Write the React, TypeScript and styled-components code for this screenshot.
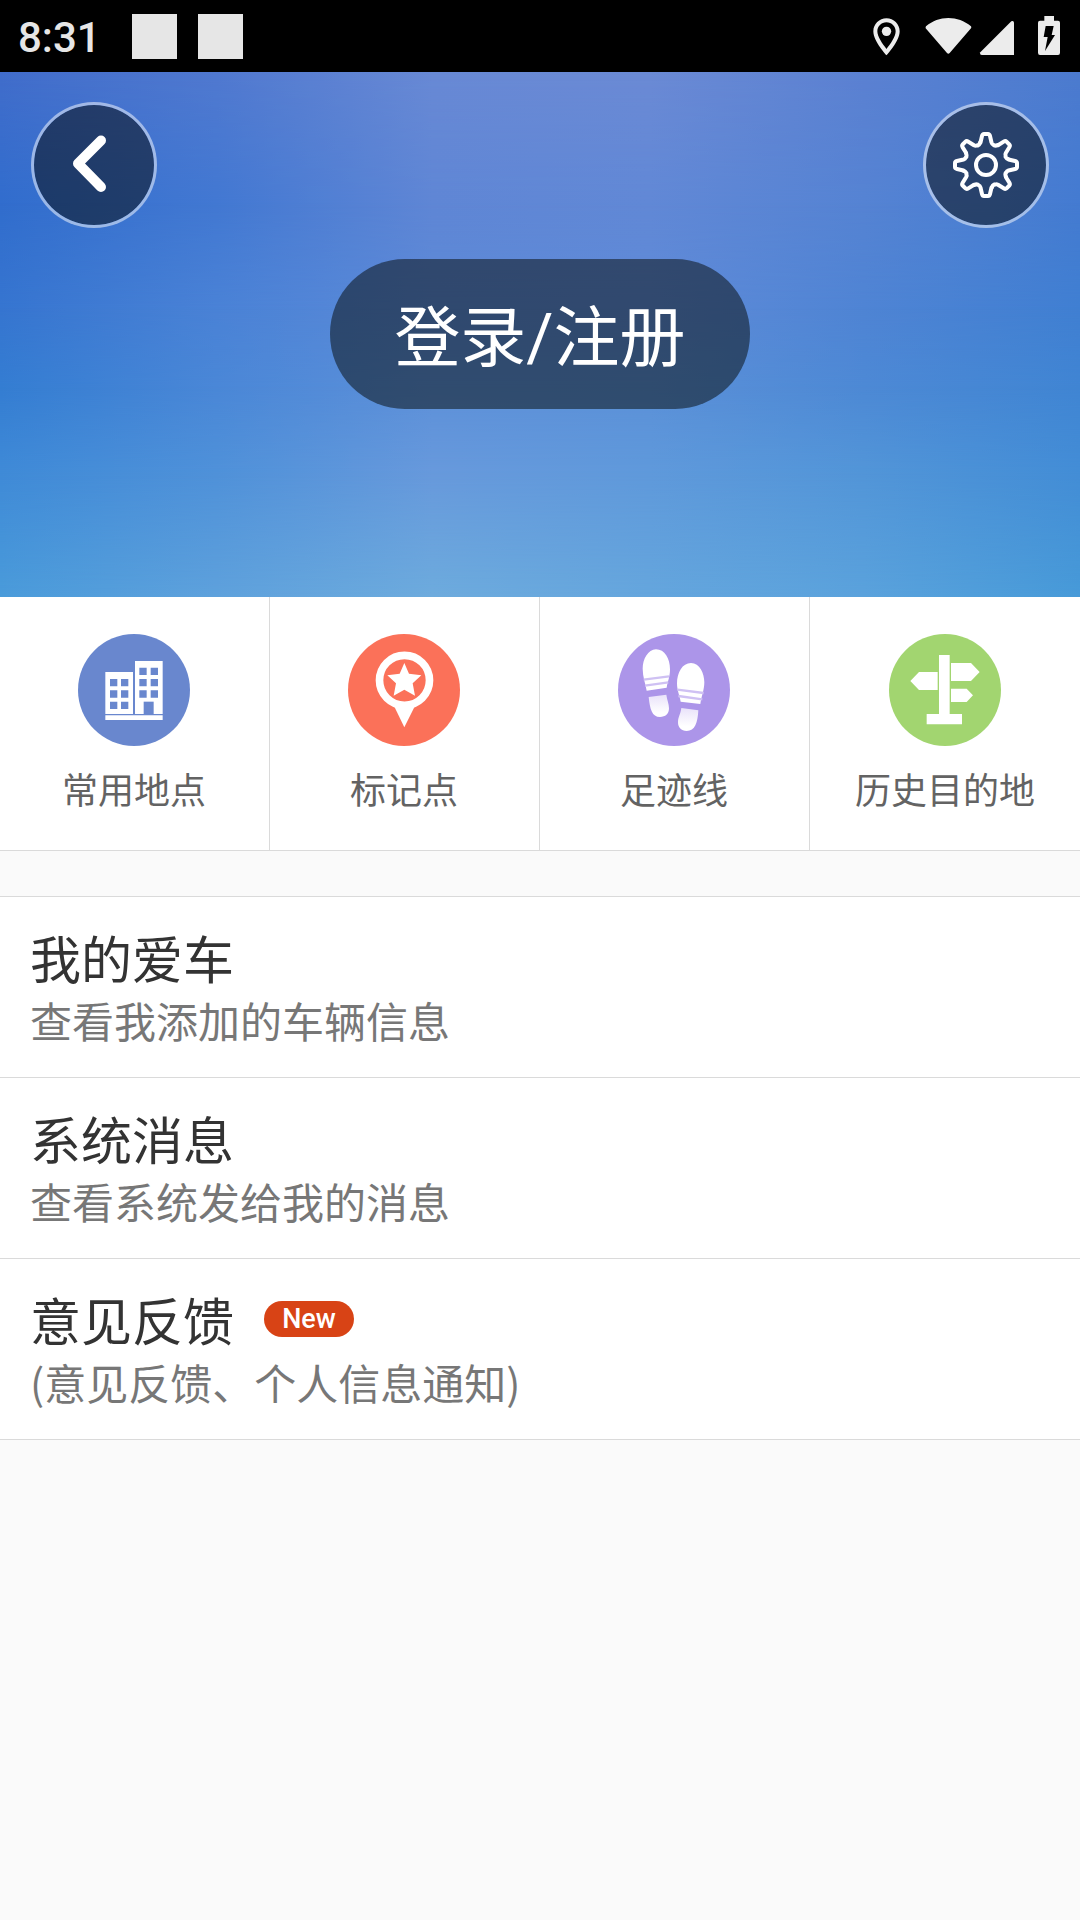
import React from "react";
import styled, { createGlobalStyle } from "styled-components";

const GlobalStyle = createGlobalStyle`
  *, *::before, *::after { box-sizing: border-box; }
  body {
    margin: 0;
    background: #fafafa;
    font-family: "Noto Sans CJK SC", "Noto Sans", sans-serif;
  }
  button { border: 0; padding: 0; font: inherit; cursor: pointer; }
`;

const StatusBar = styled.div`
  display: flex;
  align-items: center;
  justify-content: space-between;
  height: 72px;
  padding: 0 20px 0 18px;
  background: #000;
  color: #e6e6e6;
`;

const StatusGroup = styled.div`
  display: flex;
  align-items: center;
`;

const Clock = styled.time`
  width: 114px;
  font: 500 42px/48px Roboto, sans-serif;
  padding-top: 4px;
`;

const Notification = styled.span`
  width: 45px;
  height: 45px;
  margin-right: 21px;
  background: #e6e6e6;
`;

const Hero = styled.header`
  position: relative;
  isolation: isolate;
  display: flex;
  flex-direction: column;
  align-items: center;
  gap: 31px;
  padding: 30px 31px 188px;
  background: #5b8ad7;
`;

const Backdrop = styled.svg`
  position: absolute;
  inset: 0;
  z-index: -1;
  width: 100%;
  height: 100%;
`;

const HeroBar = styled.nav`
  display: flex;
  justify-content: space-between;
  align-self: stretch;
`;

const RoundButton = styled.button`
  display: grid;
  place-items: center;
  width: 126px;
  height: 126px;
  border: 3px solid rgba(255, 255, 255, 0.5);
  border-radius: 50%;
  background: rgba(4, 6, 6, 0.5);
  background-clip: padding-box;
`;

const LoginButton = styled.button`
  min-width: 420px;
  height: 150px;
  padding: 10px 64px 0;
  border-radius: 75px;
  background: rgba(4, 8, 6, 0.5);
  color: #fff;
  font-family: Roboto, "Noto Sans CJK SC", sans-serif;
  font-size: 66px;
  line-height: 96px;
`;

const Shortcuts = styled.nav`
  display: grid;
  grid-template-columns: repeat(4, 1fr);
  border-bottom: 1px solid #dadada;
  background: #fff;
`;

const Shortcut = styled.button`
  display: flex;
  flex-direction: column;
  align-items: center;
  gap: 16px;
  padding: 37px 0 35px;
  background: #fff;
  color: #636363;
  font-size: 36px;
  line-height: 53px;

  &:not(:last-child) {
    padding-right: 1px;
    border-right: 1px solid #dadada;
  }
`;

const Menu = styled.ul`
  margin: 45px 0 0;
  padding: 0;
  list-style: none;
  border-top: 1px solid #dadada;
`;

const MenuRow = styled.button`
  display: block;
  width: 100%;
  padding: 27px 30px;
  border-bottom: 1px solid #dadada;
  background: #fff;
  text-align: left;
`;

const MenuTitle = styled.span`
  display: flex;
  align-items: center;
  gap: 30px;
  color: #333;
  font-size: 51px;
  line-height: 66px;
`;

const MenuNote = styled.span`
  display: block;
  color: #777;
  font-size: 42px;
  line-height: 60px;
`;

const Badge = styled.span`
  width: 90px;
  height: 36px;
  border-radius: 18px;
  background: #d84315;
  color: #fff;
  font-family: Roboto, sans-serif;
  font-size: 27px;
  font-weight: 500;
  line-height: 37px;
  text-align: center;
`;

/* Soft sky: each row is a set of evenly spaced colours, faded into the row below it. */
const SKY = [
  { y: 0, colors: ["#416dcb", "#5079d0", "#6889d5", "#6b8ad5", "#5b81d2", "#4c7bcf"] },
  { y: 25, colors: ["#316dcd", "#4278d2", "#5f86d5", "#6188d6", "#5583d3", "#447bd1"] },
  { y: 45, colors: ["#3675d0", "#4a82d6", "#5c8ad8", "#5f8bd8", "#4f84d4", "#407fd2"] },
  { y: 60, colors: ["#347dd2", "#4a87d7", "#5d90d9", "#5b90d8", "#4d89d5", "#4085d3"] },
  { y: 76, colors: ["#3f8ad7", "#4f91d9", "#6799dc", "#5f99db", "#5295d8", "#438dd6"] },
  { y: 100, colors: ["#4a9bda", "#5ea1dc", "#6dabdd", "#65a6dd", "#5aa2dc", "#479ad8"] },
];

const Sky = () => (
  <Backdrop viewBox="0 0 100 100" preserveAspectRatio="none" aria-hidden="true">
    <defs>
      {SKY.map(({ y, colors }, row) => (
        <React.Fragment key={y}>
          <linearGradient id={`sky${row}`}>
            {colors.map((color, i) => (
              <stop key={color} offset={i / (colors.length - 1)} stopColor={color} />
            ))}
          </linearGradient>
          {row > 0 && (
            <>
              <linearGradient id={`fade${row}`} gradientUnits="userSpaceOnUse" x1="0" x2="0" y1={SKY[row - 1].y} y2={y}>
                <stop offset="0" stopColor="#fff" stopOpacity="0" />
                <stop offset="1" stopColor="#fff" />
              </linearGradient>
              <mask id={`mask${row}`} maskUnits="userSpaceOnUse" x="0" y="0" width="100" height="100" style={{ maskType: "alpha" }}>
                <rect width="100" height="100" fill={`url(#fade${row})`} />
              </mask>
            </>
          )}
        </React.Fragment>
      ))}
    </defs>
    {SKY.map(({ y }, row) => (
      <rect key={y} width="100" height="100" fill={`url(#sky${row})`} mask={row > 0 ? `url(#mask${row})` : undefined} />
    ))}
  </Backdrop>
);

const StatusIcons = () => (
  <svg width="188" height="40" viewBox="0 0 564 120" fill="#ececec" aria-hidden="true">
    <path d="M43.500 9C22 9 4 26 4 48c0 30 39.500 72 39.500 72S83 78 83 48C83 26 65 9 43.500 9zM43.500 101C31 85 16 64 16 48c0-15 12-27 27.500-27S71 33 71 48c0 16-15 37-27.500 53z" fillRule="evenodd" transform="translate(0 -2)" />
    <circle cx="43.500" cy="46" r="14" />
    <path d="M162 31C182 14 204 6 229 6s48 8 68 25q2 3 0 6L233 111q-4 5-8 0L161 37q-1-3 1-6z" />
    <path d="M418 16q7-4 8 4v97H330q-8 0-5-8z" />
    <path d="M517 0h29v14h12q6 0 6 6v90q0 7-6 7h-54q-6 0-6-7V20q0-6 6-6h13z" />
    <path d="M521 30h24l-6 27h10l-30 48 8-42h-12z" fill="#000" />
  </svg>
);

const BackIcon = () => (
  <svg width="120" height="120" viewBox="0 0 120 120" fill="none" aria-hidden="true">
    <path d="M67 35.500L44 58.500L67 82" stroke="#fff" strokeWidth="10" strokeLinecap="round" strokeLinejoin="round" />
  </svg>
);

const TOOTH =
  "M-5.500 -22.500L-4 -29Q-3.500 -31 -2 -31H2Q3.500 -31 4 -29L5.500 -22.500Q6 -20.800 7.500 -20.200L8.100 -19.600Q9.800 -19 11.600 -20";

const GearIcon = () => (
  <svg width="68" height="68" viewBox="-34 -34 68 68" fill="none" stroke="#fff" strokeWidth="4" strokeLinejoin="round" strokeLinecap="round" aria-hidden="true">
    {[0, 45, 90, 135, 180, 225, 270, 315].map((angle) => (
      <path key={angle} d={TOOTH} transform={`rotate(${angle})`} />
    ))}
    <circle r="10" />
  </svg>
);

const PlacesIcon = () => (
  <svg width="112" height="112" viewBox="234 162 336 336" aria-hidden="true">
    <circle cx="402" cy="330" r="168" fill="#6987ce" />
    <path fill="#fff" d="M316 276h83v126h-83zM405 243h83v159h-83zM316 406h172v14H316z" />
    <g fill="#6987ce">
      {[297, 331, 365].map((y) => (
        <path key={y} d={`M330 ${y}h22v22h-22zM363 ${y}h22v22h-22z`} />
      ))}
      {[263, 297, 331].map((y) => (
        <path key={y} d={`M418 ${y}h22v22h-22zM452 ${y}h22v22h-22z`} />
      ))}
      <path d="M431 365h30v37h-30z" />
    </g>
  </svg>
);

const MarkIcon = () => (
  <svg width="112" height="112" viewBox="235 162 336 336" aria-hidden="true">
    <circle cx="403" cy="330" r="168" fill="#fb7159" />
    <path fill="#fff" d="M372 376L404 442L437 376z" />
    <circle cx="404.500" cy="301" r="75" fill="#fb7159" stroke="#fff" strokeWidth="23" />
    <path fill="#fff" d="M404 249L418 281L455 286L429 310L436 347L404 329L372 347L379 310L353 286L390 281z" />
  </svg>
);

const TracksIcon = () => (
  <svg width="112" height="112" viewBox="234 162 336 336" aria-hidden="true">
    <defs>
      <linearGradient id="heel" x1="0" y1="0" x2="0" y2="1">
        <stop offset="0" stopColor="#e9e2fa" />
        <stop offset="0.800" stopColor="#fff" />
      </linearGradient>
    </defs>
    <circle cx="402" cy="330" r="168" fill="#ac95e9" />
    <path fill="#fff" d="M348 208C324 208 308 238 308 266C308 290 316 310 320 332L380 323C383 305 390 290 390 268C390 236 374 208 348 208z" />
    <path fill="url(#heel)" d="M326 351L379 344C381 360 387 370 387 385C387 402 376 411 360 411C336 411 330 388 326 351z" />
    <path stroke="#cfc1f3" strokeWidth="7" d="M311 299L387 289M315 317L385 307" />
    <path fill="#fff" d="M453 249C479 249 493 280 493 307C493 330 484 350 481 372L422 365C419 346 411 332 411 310C411 278 427 249 453 249z" />
    <path fill="url(#heel)" d="M424 384L475 391C473 428 465 453 440 453C424 453 414 443 414 427C414 410 422 402 424 384z" />
    <path stroke="#cfc1f3" strokeWidth="7" d="M412 329L491 339M415 348L487 358" />
  </svg>
);

const HistoryIcon = () => (
  <svg width="112" height="112" viewBox="237 162 336 336" aria-hidden="true">
    <circle cx="405" cy="330" r="168" fill="#a2d570" />
    <path fill="#fff" d="M387 225h32v177h37v31H350v-31h37zM383 276v54h-56l-26-27 26-27zM423 249h60l26 27-26 27h-60zM423 326h47l19 20-19 20h-47z" />
  </svg>
);

const shortcuts = [
  { label: "常用地点", Icon: PlacesIcon },
  { label: "标记点", Icon: MarkIcon },
  { label: "足迹线", Icon: TracksIcon },
  { label: "历史目的地", Icon: HistoryIcon },
];

const menu = [
  { title: "我的爱车", note: "查看我添加的车辆信息" },
  { title: "系统消息", note: "查看系统发给我的消息" },
  { title: "意见反馈", note: "(意见反馈、个人信息通知)", badge: "New" },
];

export default function App() {
  return (
    <>
      <GlobalStyle />
      <StatusBar>
        <StatusGroup>
          <Clock>8:31</Clock>
          <Notification />
          <Notification />
        </StatusGroup>
        <StatusIcons />
      </StatusBar>
      <Hero>
        <Sky />
        <HeroBar>
          <RoundButton type="button" aria-label="返回"><BackIcon /></RoundButton>
          <RoundButton type="button" aria-label="设置"><GearIcon /></RoundButton>
        </HeroBar>
        <LoginButton type="button">登录/注册</LoginButton>
      </Hero>
      <main>
        <Shortcuts>
          {shortcuts.map(({ label, Icon }) => (
            <Shortcut key={label} type="button">
              <Icon />
              {label}
            </Shortcut>
          ))}
        </Shortcuts>
        <Menu>
          {menu.map(({ title, note, badge }) => (
            <li key={title}>
              <MenuRow type="button">
                <MenuTitle>
                  {title}
                  {badge && <Badge>{badge}</Badge>}
                </MenuTitle>
                <MenuNote>{note}</MenuNote>
              </MenuRow>
            </li>
          ))}
        </Menu>
      </main>
    </>
  );
}
